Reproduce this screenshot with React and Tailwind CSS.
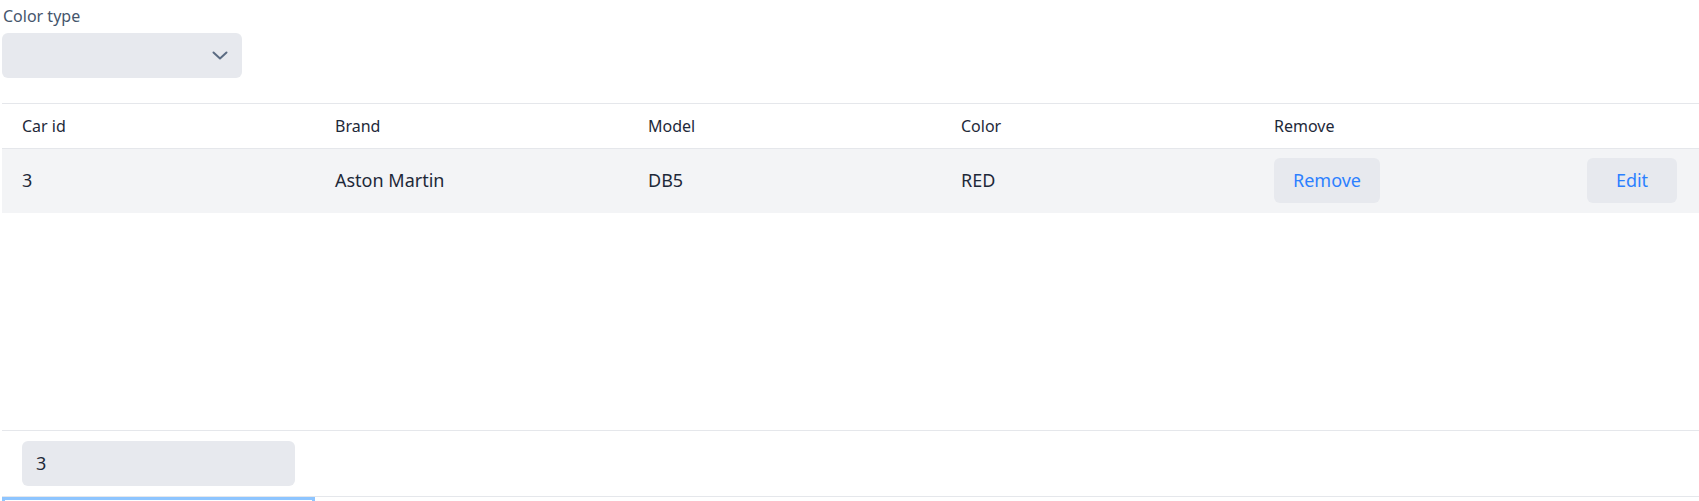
import React from "react";

const cols = ["Car id", "Brand", "Model", "Color", "Remove", ""];

function Chevron() {
  return (
    <svg width="16" height="9" viewBox="0 0 16 9" fill="none" stroke="#5b6b82" strokeWidth="2" strokeLinecap="round" strokeLinejoin="round">
      <path d="M1.5 1.5l6.5 6 6.5-6" />
    </svg>
  );
}

export default function App() {
  return (
    <div className="min-h-screen bg-white pl-[2px] text-gray-800" style={{ fontFamily: '"Noto Sans", "Open Sans", sans-serif' }}>
      <div className="pt-[5px]">
        <label className="block pl-[1px] text-[16px] leading-[22px] text-slate-600">Color type</label>
        <div className="mt-[6px] flex h-[45px] w-[240px] items-center justify-end rounded-md bg-[#e7e9ee] pr-[14px]">
          <Chevron />
        </div>
      </div>

      <div className="mt-[25px] h-[327px] border-t border-gray-200">
        <table className="w-full table-fixed border-collapse">
          <colgroup>
            <col className="w-[313px]" />
            <col className="w-[313px]" />
            <col className="w-[313px]" />
            <col className="w-[313px]" />
            <col className="w-[313px]" />
            <col />
          </colgroup>
          <thead>
            <tr className="h-[44px] border-b border-gray-200">
              {cols.map((c, i) => (
                <th key={i} className="px-[20px] text-left text-[16px] font-normal text-gray-800">{c}</th>
              ))}
            </tr>
          </thead>
          <tbody>
            <tr className="h-[65px] bg-[#f3f4f6] text-[18px]">
              <td className="px-[20px]">3</td>
              <td className="px-[20px]">Aston Martin</td>
              <td className="px-[20px]">DB5</td>
              <td className="px-[20px]">RED</td>
              <td className="px-[20px]">
                <button className="h-[45px] w-[106px] rounded-md bg-[#e7e9ee] text-blue-500">Remove</button>
              </td>
              <td className="px-[20px]">
                <button className="h-[45px] w-[90px] rounded-md bg-[#e7e9ee] text-blue-500">Edit</button>
              </td>
            </tr>
          </tbody>
        </table>
      </div>

      <div className="border-t border-gray-200 px-[20px] pt-[10px] pb-[10px]">
        <div className="flex h-[45px] w-[273px] items-center rounded-md bg-[#e7e9ee] px-[14px] text-[18px] text-gray-800">3</div>
      </div>
      <div className="border-t border-gray-200">
        <div className="h-[40px] w-[313px] border-[3px] border-blue-300"></div>
      </div>
    </div>
  );
}
